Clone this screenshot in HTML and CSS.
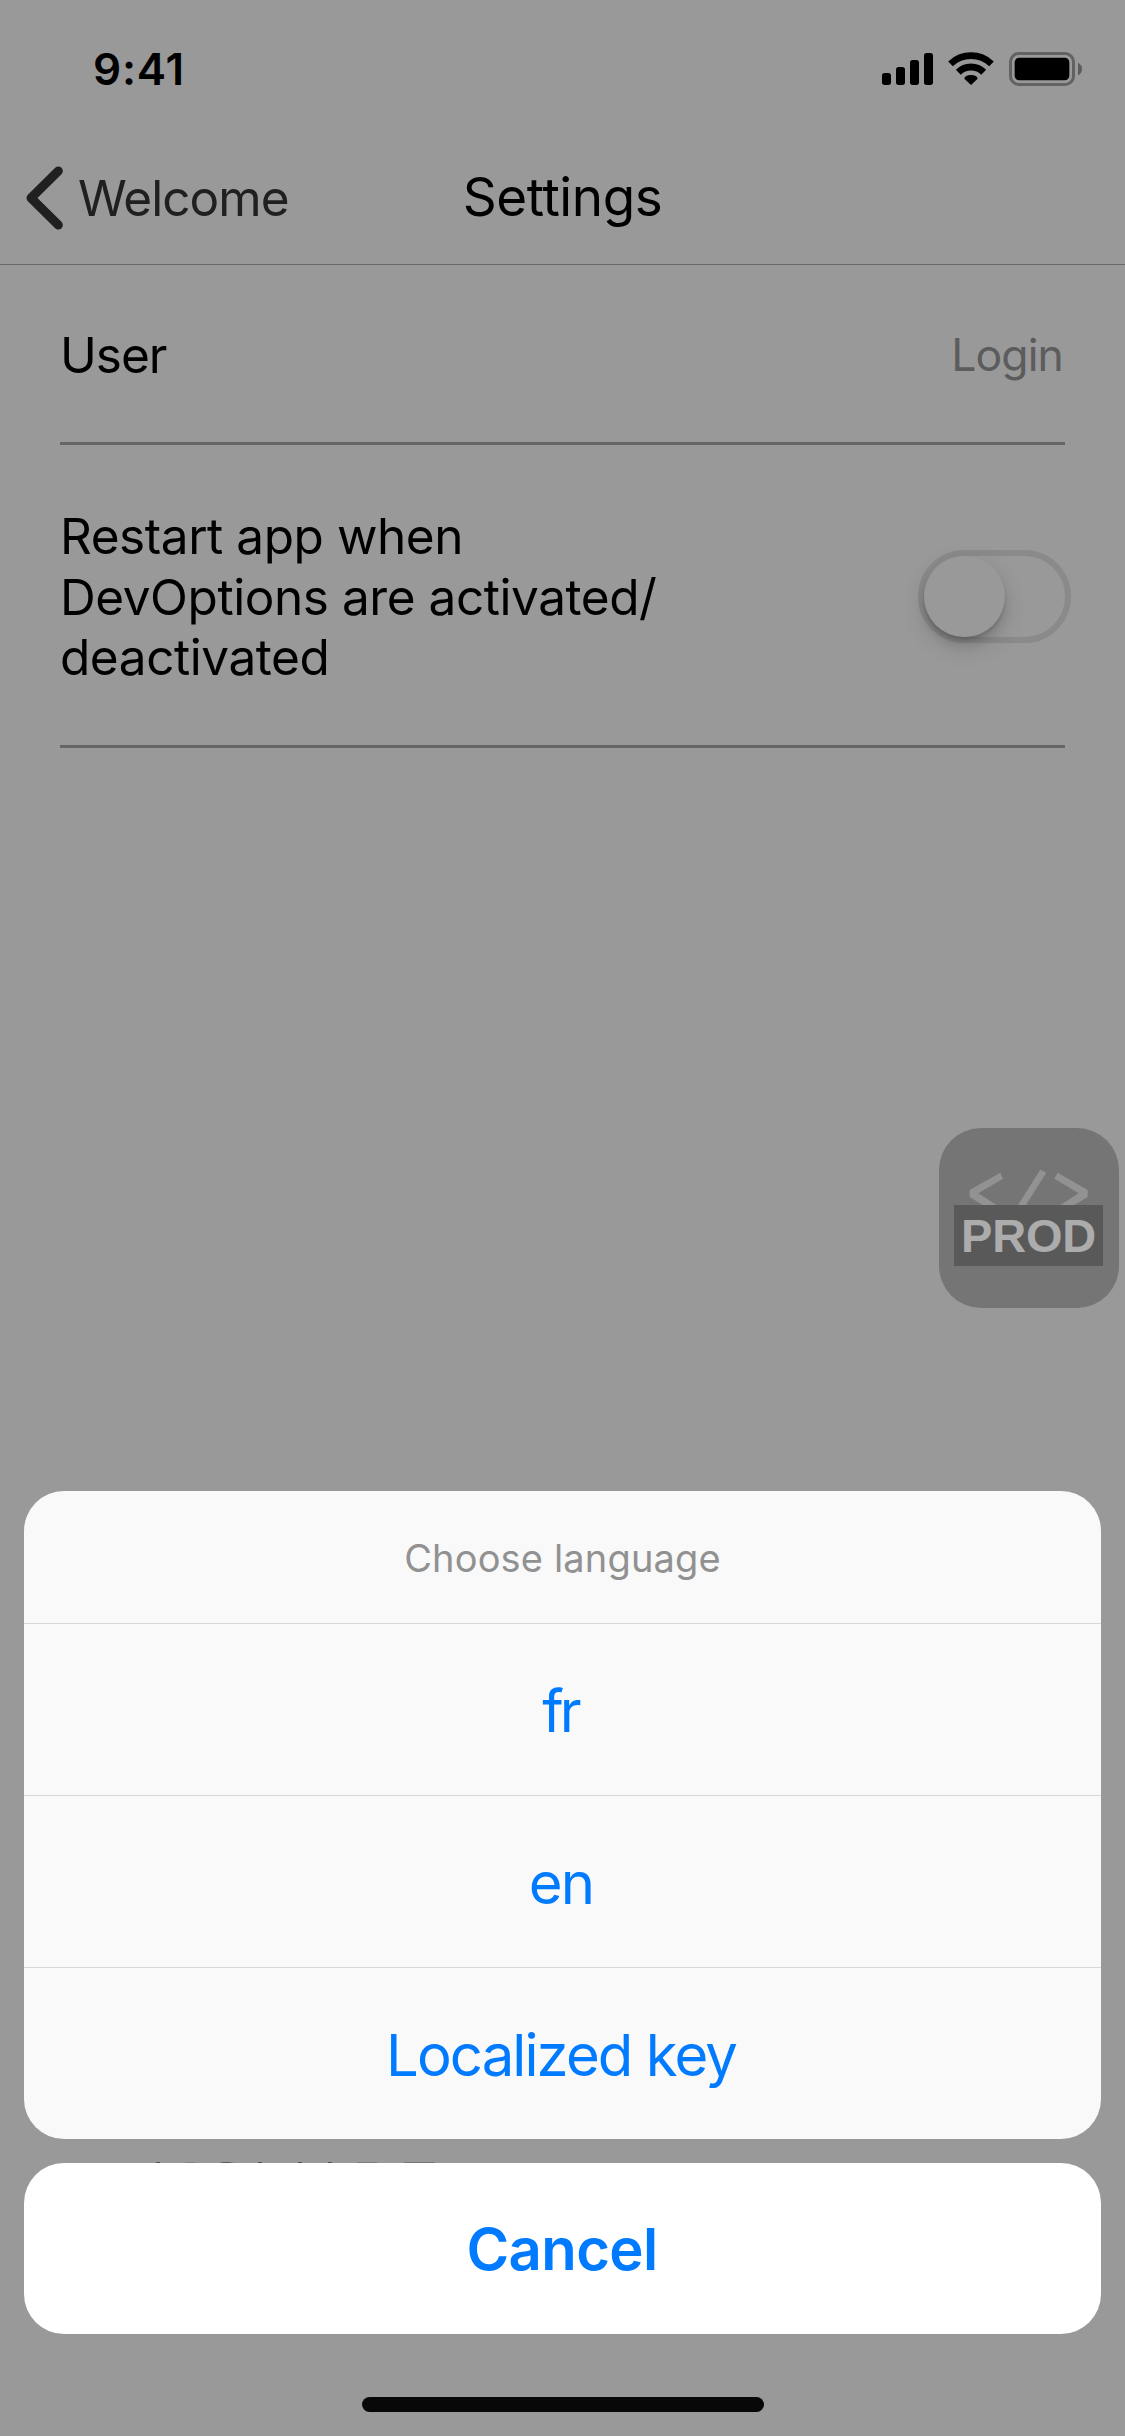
FILE: index.html
```
<!DOCTYPE html>
<html lang="en">
<head>
<meta charset="utf-8">
<title>Settings</title>
<link rel="stylesheet" href="styles.css">
</head>
<body>
<div class="screen">
  <header class="status-bar">
    <span class="time">9:41</span>
    <svg class="status-icons" width="201" height="36" viewBox="0 0 603 108" aria-hidden="true">
      <g transform="translate(-96 -93)">
        <rect x="96" y="159" width="27" height="36" rx="8"/>
        <rect x="138" y="141" width="27" height="54" rx="8"/>
        <rect x="180" y="120" width="27" height="75" rx="8"/>
        <rect x="222" y="99" width="27" height="96" rx="8"/>
        <path d="M301.500 131.500A89 89 0 0 1 424.500 131.500" fill="none" stroke="#000" stroke-width="20"/>
        <path d="M325 156.500A54.500 54.500 0 0 1 401 156.500" fill="none" stroke="#000" stroke-width="21"/>
        <path d="M363 195L343 176Q345 165 363 165T383 176Z"/>
        <rect x="481.500" y="100.500" width="189" height="93" rx="25" fill="none" stroke="#626262" stroke-width="9"/>
        <rect x="494" y="113" width="164" height="68" rx="14"/>
        <path d="M684 128Q696 134 696 147T684 166Z" fill="#5c5c5c"/>
      </g>
    </svg>
  </header>
  <nav class="nav-bar">
    <a class="back">
      <svg width="38" height="64" viewBox="0 0 114 192" aria-hidden="true"><path d="M97 15L15 96L97 177" fill="none" stroke="#202020" stroke-width="27" stroke-linecap="round" stroke-linejoin="round"/></svg>
      <span>Welcome</span>
    </a>
    <h1 class="title">Settings</h1>
  </nav>
  <main class="list">
    <div class="row row-user">
      <span class="label label-user">User</span>
      <span class="value">Login</span>
    </div>
    <div class="row row-restart">
      <span class="label">Restart app when<br>DevOptions are activated/<br>deactivated</span>
      <span class="toggle"><span class="thumb"></span></span>
    </div>
  </main>

  <div class="dev-badge">
    <svg class="code-icon" width="180" height="180" viewBox="0 0 180 180" fill="#929292" aria-hidden="true">
      <path d="M61.300 44.700L64 50.700L39.300 65.300L60 78.500H46L30.700 69V62Z"/>
      <path d="M101.300 41.700L107.300 44.700L85 80H77Z"/>
      <path d="M118.700 44.700L115.300 50.700L139.700 65.300L119 78.500H133L148.700 69V62Z"/>
    </svg>
    <span class="env">PROD</span>
  </div>

  <!-- tips of the version label behind the cancel button -->
  <svg class="version-tips" width="280" height="1" viewBox="0 0 280 1" fill="#555" aria-hidden="true">
    <rect x="1" width="4" height="1"/><rect x="30" width="10" height="1" opacity=".3"/>
    <path d="M64 1Q71 -1 79 1Z"/><rect x="103" width="4" height="1"/>
    <rect x="143" width="4" height="1"/><rect x="173" width="4" height="1"/>
    <rect x="202" width="20" height="1" opacity=".4"/><rect x="249" width="31" height="1" opacity=".5"/>
  </svg>

  <div class="overlay">
    <section class="sheet">
      <div class="sheet-title">Choose language</div>
      <div class="action action-fr">fr</div>
      <div class="action">en</div>
      <div class="action action-key">Localized key</div>
    </section>
    <div class="cancel">Cancel</div>
    <div class="home-indicator"></div>
  </div>
</div>
</body>
</html>
```
FILE: styles.css
```
body {
  margin: 0;
  font-family: Inter, "Liberation Sans", sans-serif;
  color: #000;
}

.screen {
  position: relative;
  width: 1125px;
  height: 2436px;
  overflow: hidden;
  background: #999;
}

.status-bar {
  display: flex;
  align-items: center;
  justify-content: space-between;
  box-sizing: border-box;
  height: 138px;
  padding: 0 42px 0 93px;
}

.time {
  font-size: 44px;
  font-weight: 600;
  letter-spacing: 0.8px;
}

.nav-bar {
  display: grid;
  grid-template-columns: 1fr auto 1fr;
  align-items: center;
  box-sizing: border-box;
  height: 127px;
  padding-bottom: 6px;
  border-bottom: 1px solid #6a6a6a;
}

.back {
  display: flex;
  align-items: center;
  gap: 14px;
  padding-left: 26px;
  font-size: 49.5px;
  line-height: 64px;
  letter-spacing: -0.95px;
  color: #202020;
}

.title {
  margin: 0;
  padding-bottom: 3px;
  font-size: 53px;
  font-weight: 400;
  line-height: 60px;
  letter-spacing: -0.4px;
}

.list {
  padding: 0 60px;
}

.row {
  display: flex;
  align-items: center;
  justify-content: space-between;
  box-sizing: border-box;
  padding-top: 3px;
  border-bottom: 3px solid #656665;
}

.row-user {
  height: 180px;
}

.row-restart {
  height: 303px;
}

.label {
  font-size: 49.5px;
  line-height: 60.5px;
  letter-spacing: -0.44px;
}

.row-restart .label {
  padding-top: 1px;
}

.label-user {
  letter-spacing: -1.04px;
}

.value {
  padding-right: 2px;
  font-size: 44.5px;
  letter-spacing: -0.9px;
  color: #5c5c5c;
}

.toggle {
  box-sizing: border-box;
  width: 153px;
  height: 93px;
  margin-right: -6px;
  border: 6px solid #8a8a8a;
  border-radius: 47px;
}

.thumb {
  display: block;
  width: 81px;
  height: 81px;
  border-radius: 50%;
  background: #999;
  box-shadow: 0 9px 24px rgba(0, 0, 0, 0.15), 0 3px 3px rgba(0, 0, 0, 0.12), 0 9px 9px rgba(0, 0, 0, 0.08);
}

/* floating developer shortcut */
.dev-badge {
  position: absolute;
  top: 1128px;
  left: 939px;
  width: 180px;
  height: 180px;
  border-radius: 42px;
  background: #757575;
}

.code-icon {
  display: block;
}

.env {
  position: absolute;
  top: 77px;
  left: 15px;
  width: 149px;
  height: 61px;
  background: #595959;
  color: #acacac;
  font: 700 47px/62px "Liberation Sans", sans-serif;
  letter-spacing: -0.2px;
  text-align: center;
}

.version-tips {
  position: absolute;
  top: 2162px;
  left: 155px;
}

.overlay {
  position: absolute;
  inset: 0;
  display: flex;
  flex-direction: column;
  justify-content: flex-end;
  padding: 0 24px 24px;
}

.sheet {
  border-radius: 40px;
  background: #f9f9f9;
  overflow: hidden;
}

.sheet-title {
  box-sizing: border-box;
  height: 132px;
  padding-top: 2px;
  font-size: 38px;
  line-height: 130px;
  letter-spacing: 0.16px;
  text-align: center;
  color: #919191;
}

.action {
  box-sizing: border-box;
  height: 172px;
  padding: 1px 3px 0 0;
  border-top: 1px solid #d7d7d9;
  font-size: 58px;
  line-height: 172px;
  letter-spacing: -1.9px;
  text-align: center;
  color: #007aff;
}

.action-fr {
  padding-right: 5px;
  letter-spacing: -4px;
}

.cancel {
  box-sizing: border-box;
  height: 171px;
  margin-top: 24px;
  padding: 1px 1px 0 0;
  border-radius: 40px;
  background: #fff;
  font-size: 58px;
  font-weight: 600;
  line-height: 171px;
  letter-spacing: -0.6px;
  text-align: center;
  color: #007aff;
}

.home-indicator {
  width: 402px;
  height: 15px;
  margin: 63px auto 0;
  border-radius: 8px;
  background: #080808;
}
```
